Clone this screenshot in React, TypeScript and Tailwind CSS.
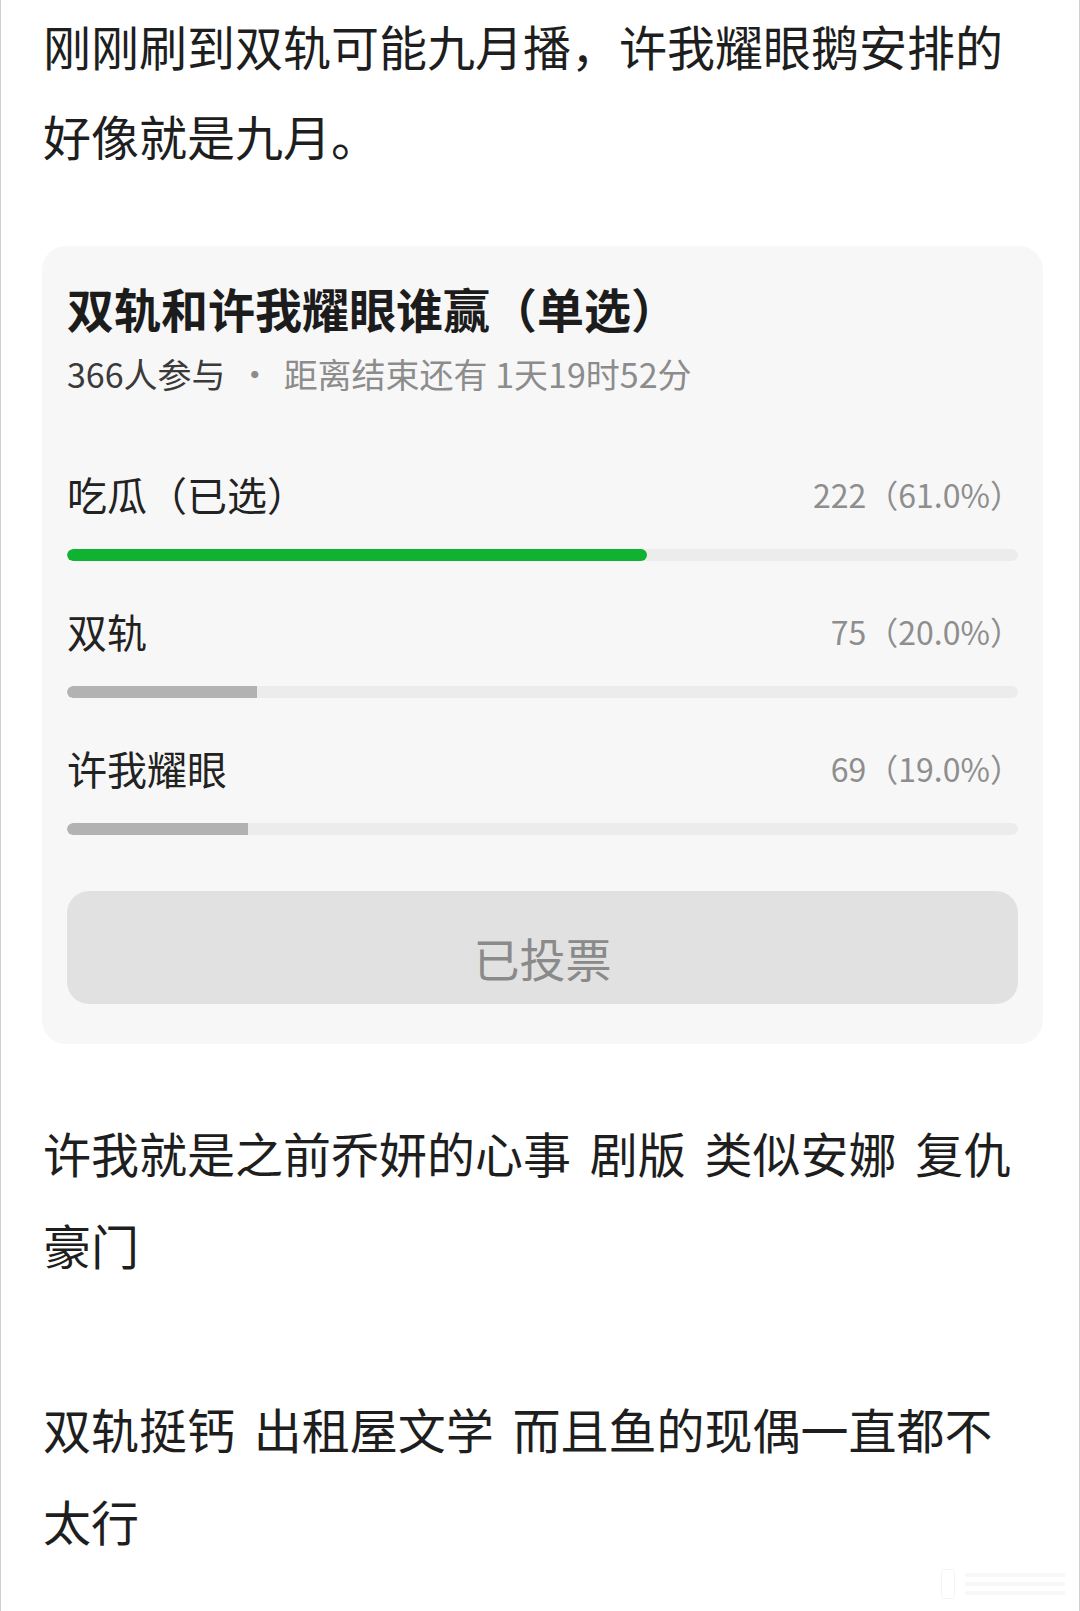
import React from 'react';

type PollOption = {
  label: string;
  count: number;
  percent: string;
  width: number;
  selected?: boolean;
};

const options: PollOption[] = [
  { label: '吃瓜（已选）', count: 222, percent: '61.0%', width: 61, selected: true },
  { label: '双轨', count: 75, percent: '20.0%', width: 20 },
  { label: '许我耀眼', count: 69, percent: '19.0%', width: 19 },
];

const font = "font-['Noto_Sans_CJK_SC','Noto_Sans',sans-serif]";

const PollCard: React.FC = () => {
  return (
    <div className="mt-[66px] ml-[41px] w-[1001px] rounded-[24px] bg-[#f7f7f7] px-[25px] pt-[34px] pb-[40px]">
      <h2 className="text-[47px] leading-[56px] font-bold text-[#1c1c1c]">
        双轨和许我耀眼谁赢（单选）
      </h2>
      <div className="mt-[18px] flex items-center text-[34px] leading-[40px] text-[#8c8c8c]">
        <span className="text-[#3a3a3a]">366人参与</span>
        <span className="mx-[12px]">·</span>
        <span>距离结束还有 1天19时52分</span>
      </div>

      <div className="mt-[72px] flex flex-col gap-[42px]">
        {options.map((opt) => (
          <div key={opt.label} className="flex flex-col">
            <div className="flex items-center justify-between h-[56px]">
              <span className="text-[40px] text-[#222]">{opt.label}</span>
              <span className="mr-[-4px] text-[32px] text-[#8e8e8e]">
                {opt.count}（{opt.percent}）
              </span>
            </div>
            <div className="mt-[27px] h-[12px] w-full rounded-full bg-[#ececec] overflow-hidden">
              <div
                className={opt.selected ? 'h-full rounded-full bg-[#10b232]' : 'h-full rounded-l-full bg-[#b2b2b2]'}
                style={{ width: `${opt.width}%` }}
              />
            </div>
          </div>
        ))}
      </div>

      <button className="mt-[56px] flex h-[113px] w-full items-center justify-center rounded-[22px] bg-[#e1e1e1] pt-[20px] text-[46px] text-[#8a8a8a]">
        已投票
      </button>
    </div>
  );
};

export default function App() {
  return (
    <div className={`relative h-[1611px] w-[1080px] overflow-hidden border-x border-[#cfcfcf] bg-white ${font} text-[#1e1e1e]`}>
      <div className="pl-[42px] pr-[58px] text-[48px] leading-[90px]">
        <p>刚刚刷到双轨可能九月播，许我耀眼鹅安排的好像就是九月。</p>
      </div>

      <PollCard />

      <div className="mt-[62px] pl-[42px] pr-[58px] text-[48px] leading-[92px] [word-spacing:8px]">
        <p>许我就是之前乔妍的心事 剧版 类似安娜 复仇豪门</p>
        <p className="h-[92px]" />
        <p>双轨挺钙 出租屋文学 而且鱼的现偶一直都不太行</p>
      </div>

      {/* faint watermark bottom right */}
      <div className="absolute right-[14px] bottom-[12px] flex items-center gap-[10px] opacity-40">
        <div className="h-[30px] w-[14px] rounded-[3px] border border-[#e6e6e6]" />
        <div className="flex flex-col gap-[5px]">
          <div className="h-[4px] w-[100px] bg-[#efefef]" />
          <div className="h-[4px] w-[100px] bg-[#efefef]" />
          <div className="h-[4px] w-[100px] bg-[#efefef]" />
        </div>
      </div>
    </div>
  );
}
